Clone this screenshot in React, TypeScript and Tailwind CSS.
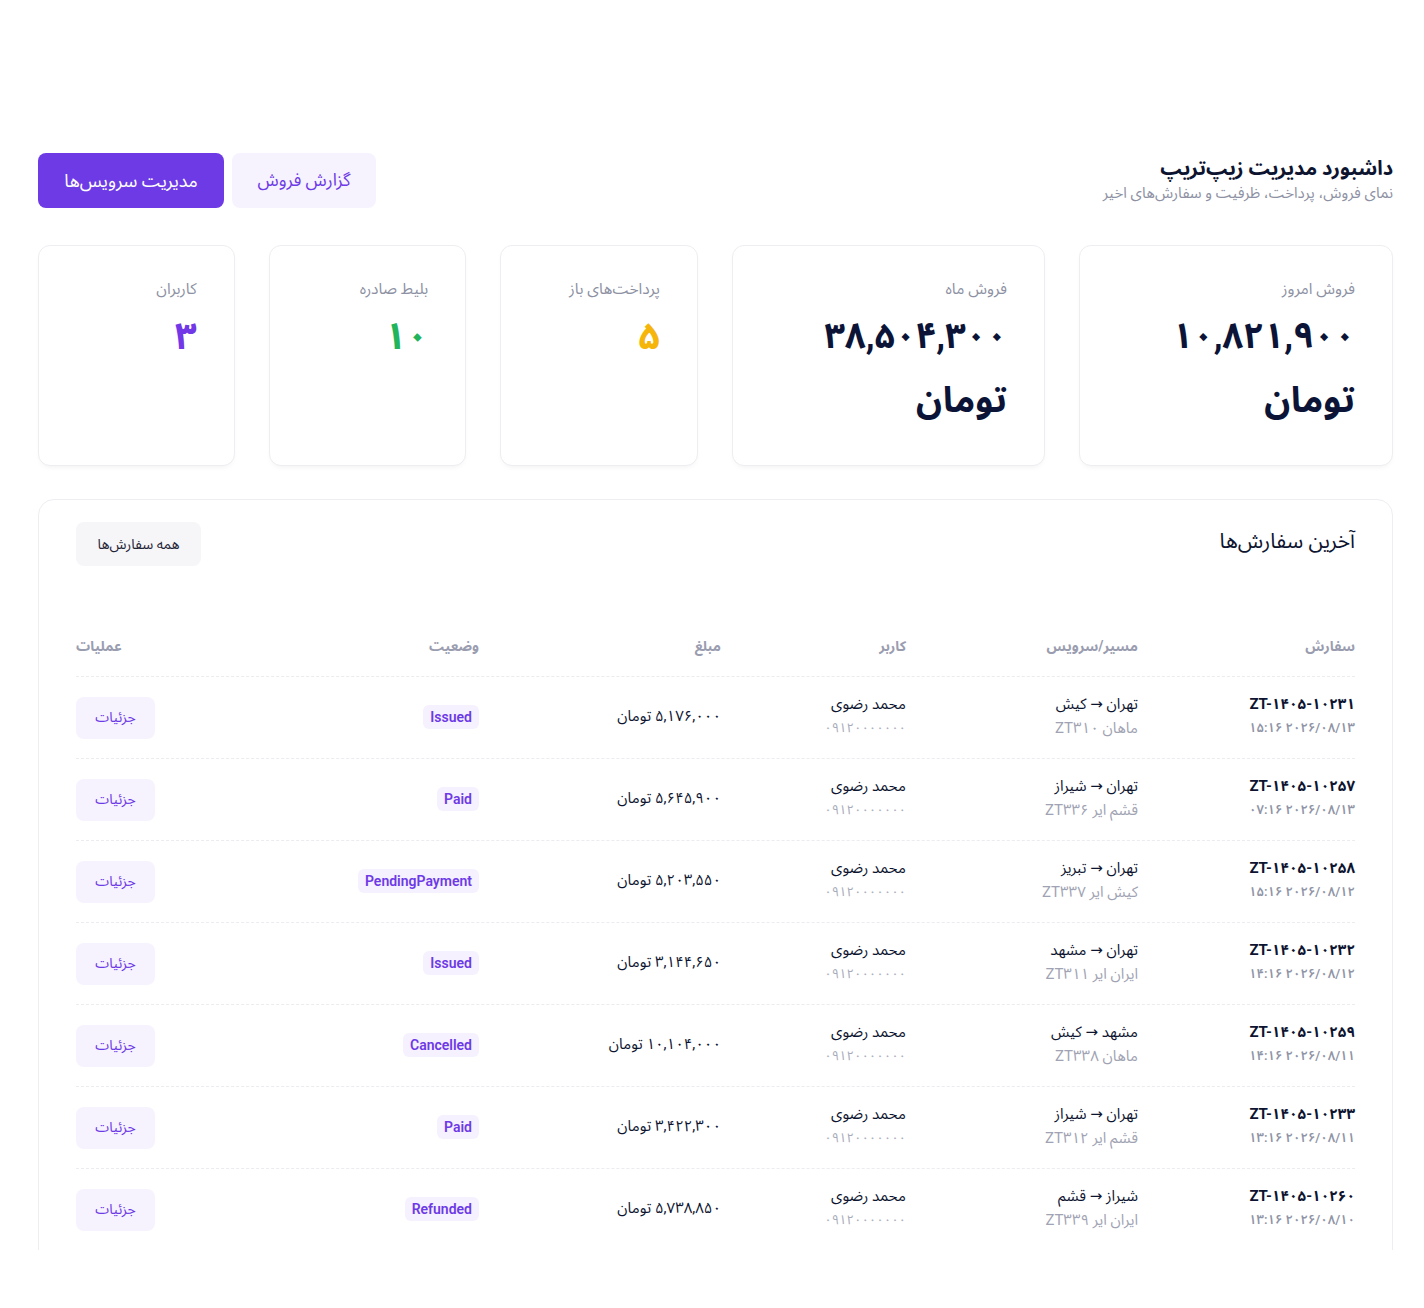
import type { ReactNode } from 'react'

type OrderStatus = 'Issued' | 'Paid' | 'PendingPayment' | 'Cancelled' | 'Refunded'

interface Order {
  code: string
  date: string
  route: string
  service: string
  user: string
  phone: string
  amount: string
  status: OrderStatus
}

const FONT = "font-['Roboto','Noto_Sans_Arabic','DejaVu_Sans',sans-serif]"

const orders: Order[] = [
  {
    code: 'ZT-۱۴۰۵-۱۰۲۳۱',
    date: '۲۰۲۶/۰۸/۱۳ ۱۵:۱۶',
    route: 'تهران → کیش',
    service: 'ماهان ZT۳۱۰',
    user: 'محمد رضوی',
    phone: '۰۹۱۲۰۰۰۰۰۰۰',
    amount: '۵,۱۷۶,۰۰۰',
    status: 'Issued',
  },
  {
    code: 'ZT-۱۴۰۵-۱۰۲۵۷',
    date: '۲۰۲۶/۰۸/۱۳ ۰۷:۱۶',
    route: 'تهران → شیراز',
    service: 'قشم ایر ZT۳۳۶',
    user: 'محمد رضوی',
    phone: '۰۹۱۲۰۰۰۰۰۰۰',
    amount: '۵,۶۴۵,۹۰۰',
    status: 'Paid',
  },
  {
    code: 'ZT-۱۴۰۵-۱۰۲۵۸',
    date: '۲۰۲۶/۰۸/۱۲ ۱۵:۱۶',
    route: 'تهران → تبریز',
    service: 'کیش ایر ZT۳۳۷',
    user: 'محمد رضوی',
    phone: '۰۹۱۲۰۰۰۰۰۰۰',
    amount: '۵,۲۰۳,۵۵۰',
    status: 'PendingPayment',
  },
  {
    code: 'ZT-۱۴۰۵-۱۰۲۳۲',
    date: '۲۰۲۶/۰۸/۱۲ ۱۴:۱۶',
    route: 'تهران → مشهد',
    service: 'ایران ایر ZT۳۱۱',
    user: 'محمد رضوی',
    phone: '۰۹۱۲۰۰۰۰۰۰۰',
    amount: '۳,۱۴۴,۶۵۰',
    status: 'Issued',
  },
  {
    code: 'ZT-۱۴۰۵-۱۰۲۵۹',
    date: '۲۰۲۶/۰۸/۱۱ ۱۴:۱۶',
    route: 'مشهد → کیش',
    service: 'ماهان ZT۳۳۸',
    user: 'محمد رضوی',
    phone: '۰۹۱۲۰۰۰۰۰۰۰',
    amount: '۱۰,۱۰۴,۰۰۰',
    status: 'Cancelled',
  },
  {
    code: 'ZT-۱۴۰۵-۱۰۲۳۳',
    date: '۲۰۲۶/۰۸/۱۱ ۱۳:۱۶',
    route: 'تهران → شیراز',
    service: 'قشم ایر ZT۳۱۲',
    user: 'محمد رضوی',
    phone: '۰۹۱۲۰۰۰۰۰۰۰',
    amount: '۳,۴۲۲,۳۰۰',
    status: 'Paid',
  },
  {
    code: 'ZT-۱۴۰۵-۱۰۲۶۰',
    date: '۲۰۲۶/۰۸/۱۰ ۱۳:۱۶',
    route: 'شیراز → قشم',
    service: 'ایران ایر ZT۳۳۹',
    user: 'محمد رضوی',
    phone: '۰۹۱۲۰۰۰۰۰۰۰',
    amount: '۵,۷۳۸,۸۵۰',
    status: 'Refunded',
  },
]

const ROW_GRID = 'grid grid-cols-[217px_232px_185px_242px_1fr_79px] items-center'

function StatCard({ label, children }: { label: string; children: ReactNode }) {
  return (
    <div className="h-[221px] rounded-xl border border-[#eeeef2] bg-white pr-[37px] pl-6 pt-[32px] shadow-[0_3px_6px_-3px_rgba(15,23,42,0.08)]">
      <p className="text-[15.5px] leading-[22px] text-[#8d91a3]">{label}</p>
      <div className="mt-[4px]">{children}</div>
    </div>
  )
}

function App() {
  return (
    <div dir="rtl" className={`${FONT} h-[1250px] overflow-hidden bg-white pl-[38px] pr-[31px] pt-[153px] text-[#0f1733]`}>
      <header className="flex items-start justify-between">
        <div className="pt-[2px]">
          <h1 className="text-[20px] font-bold leading-[26px] text-[#0d1430]">داشبورد مدیریت زیپ‌تریپ</h1>
          <p className="mt-[1px] text-[15px] leading-[22px] text-[#8d91a3]">نمای فروش، پرداخت، ظرفیت و سفارش‌های اخیر</p>
        </div>
        <div className="flex gap-2">
          <button className="h-[55px] w-[144px] rounded-lg bg-[#f6f3ff] text-[17.5px] text-[#6d3ae6]">گزارش فروش</button>
          <button className="h-[55px] w-[186px] rounded-lg bg-[#6d3ae6] text-[18px] text-white">مدیریت سرویس‌ها</button>
        </div>
      </header>

      <section className="mt-[37px] grid grid-cols-[313fr_312fr_197fr_197fr_196fr] gap-[34px]">
        <StatCard label="فروش امروز">
          <p className="text-[36px] font-bold leading-[64px] text-[#0b1437]">۱۰,۸۲۱,۹۰۰ تومان</p>
        </StatCard>
        <StatCard label="فروش ماه">
          <p className="text-[36px] font-bold leading-[64px] text-[#0b1437]">۳۸,۵۰۴,۳۰۰ تومان</p>
        </StatCard>
        <StatCard label="پرداخت‌های باز">
          <p className="text-[38px] font-bold leading-[64px] text-[#f5b50a]">۵</p>
        </StatCard>
        <StatCard label="بلیط صادره">
          <p className="text-[38px] font-bold leading-[64px] text-[#22b45a]">۱۰</p>
        </StatCard>
        <StatCard label="کاربران">
          <p className="text-[38px] font-bold leading-[64px] text-[#7237e6]">۳</p>
        </StatCard>
      </section>

      <section className="mt-[33px] rounded-2xl border border-[#eeeef2] bg-white px-[37px] pt-[22px] pb-6">
        <div className="flex items-start justify-between">
          <h2 className="mt-[5px] text-[21px] leading-[28px] text-[#0d1430]">آخرین سفارش‌ها</h2>
          <button className="h-[44px] w-[125px] rounded-lg bg-[#f6f6f8] text-[14px] text-[#1f2437]">همه سفارش‌ها</button>
        </div>

        <div className="mt-[69px]">
          <div className={`${ROW_GRID} border-b border-dashed border-[#ebebf0] pb-[19px] text-[14px] font-bold leading-[22px] text-[#9a9db0]`}>
            <span>سفارش</span>
            <span>مسیر/سرویس</span>
            <span>کاربر</span>
            <span>مبلغ</span>
            <span>وضعیت</span>
            <span className="text-left">عملیات</span>
          </div>

          {orders.map((order) => (
            <div
              key={order.code}
              className={`${ROW_GRID} h-[82px] border-b border-dashed border-[#ebebf0]`}
            >
              <div className="flex flex-col gap-[3px] pb-[5px]">
                <span className="text-[15px] font-bold leading-[22px] text-[#0d1430]">{order.code}</span>
                <span className="text-[13px] font-semibold leading-[20px] text-[#8f94a6]">{order.date}</span>
              </div>
              <div className="flex flex-col gap-[3px] pb-[5px]">
                <span className="text-[15px] leading-[22px] text-[#0d1430]">{order.route}</span>
                <span className="text-[15px] leading-[20px] text-[#9fa3b3]">{order.service}</span>
              </div>
              <div className="flex flex-col gap-[3px] pb-[5px]">
                <span className="text-[15px] leading-[22px] text-[#0d1430]">{order.user}</span>
                <span className="text-[13px] leading-[20px] text-[#a7abb9]">{order.phone}</span>
              </div>
              <div className="pb-[2px] text-[15px] text-[#0d1430]">{order.amount} تومان</div>
              <div className="pb-[2px]">
                <span className="inline-block rounded-md bg-[#f5f1ff] px-[7px] py-[2px] text-[14px] font-semibold leading-[20px] text-[#6d3ae6]">
                  {order.status}
                </span>
              </div>
              <div className="flex justify-end">
                <button className="h-[42px] w-[79px] rounded-lg bg-[#f6f3ff] text-[14px] text-[#6d3ae6]">جزئیات</button>
              </div>
            </div>
          ))}
        </div>
      </section>
    </div>
  )
}

export default App
